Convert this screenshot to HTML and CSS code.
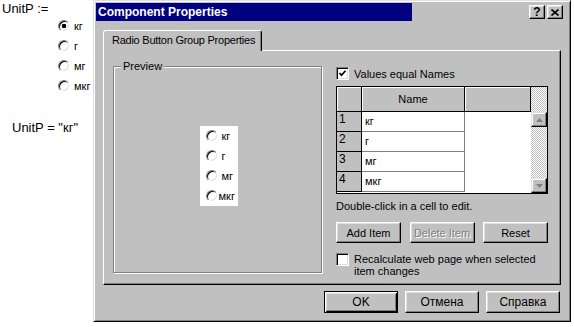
FILE: index.html
```html
<!DOCTYPE html>
<html lang="ru">
<head>
  <meta charset="UTF-8">
  <title>Component Properties</title>
  <link rel="stylesheet" href="styles.css">
</head>
<body>
  <div class="sheet">
    <div class="expr">UnitP :=</div>
    <div class="units">
      <div class="opt"><span class="radio on"></span>кг</div>
      <div class="opt"><span class="radio"></span>г</div>
      <div class="opt"><span class="radio"></span>мг</div>
      <div class="opt"><span class="radio"></span>мкг</div>
    </div>
    <div class="result">UnitP = "кг"</div>
  </div>

  <div class="dialog">
    <div class="titlebar">
      <div class="title-text">Component Properties</div>
      <div class="title-btns">
        <span class="tbtn">?</span>
        <span class="tbtn">
          <svg width="8" height="7" viewBox="0 0 8 7"><path d="M0.5 0.5 L7.5 6.5 M7.5 0.5 L0.5 6.5" stroke="#000" stroke-width="1.6"/></svg>
        </span>
      </div>
    </div>

    <div class="dlg-body">
      <div class="tabs">
        <div class="tab">Radio Button Group Properties</div>
      </div>
      <div class="panel">
        <fieldset class="group">
          <legend>Preview</legend>
          <div class="preview">
            <div class="opt"><span class="radio"></span>кг</div>
            <div class="opt"><span class="radio"></span>г</div>
            <div class="opt"><span class="radio"></span>мг</div>
            <div class="opt tight"><span class="radio"></span>мкг</div>
          </div>
        </fieldset>

        <div class="side">
          <div class="check-row">
            <span class="cbox">
              <svg width="9" height="9" viewBox="0 0 9 9"><path d="M1.5 4 L3.5 6.2 L7.5 1.8" fill="none" stroke="#000" stroke-width="1.7"/></svg>
            </span>
            Values equal Names
          </div>

          <div class="grid">
            <div class="cells">
              <div class="hd"></div>
              <div class="hd">Name</div>
              <div class="hd"></div>

              <div class="num">1</div><div class="name">кг</div><div class="blank"></div>
              <div class="num">2</div><div class="name">г</div><div class="blank"></div>
              <div class="num">3</div><div class="name">мг</div><div class="blank"></div>
              <div class="num">4</div><div class="name">мкг</div><div class="blank"></div>
            </div>
            <div class="scroll">
              <div class="track-top"></div>
              <div class="sbtn">
                <svg width="7" height="4" viewBox="0 0 7 4"><path d="M3.5 0 L7 4 L0 4 Z" fill="#808080"/></svg>
              </div>
              <div class="track"></div>
              <div class="sbtn">
                <svg width="7" height="4" viewBox="0 0 7 4"><path d="M0 0 L7 0 L3.5 4 Z" fill="#808080"/></svg>
              </div>
            </div>
          </div>

          <div class="hint">Double-click in a cell to edit.</div>

          <div class="item-btns">
            <button class="btn">Add Item</button>
            <button class="btn disabled">Delete Item</button>
            <button class="btn">Reset</button>
          </div>

          <div class="check-row wrap">
            <span class="cbox"></span>
            <span>Recalculate web page when selected<br>item changes</span>
          </div>
        </div>
      </div>

      <div class="actions">
        <button class="btn big default">OK</button>
        <button class="btn big">Отмена</button>
        <button class="btn big">Справка</button>
      </div>
    </div>
  </div>
</body>
</html>
```

FILE: styles.css
```css
body {
  margin: 0;
  width: 574px;
  height: 327px;
  position: relative;
  overflow: hidden;
  background: #fff;
  font-family: "Liberation Sans", Arial, sans-serif;
  color: #000;
}

/* worksheet on the left */

.sheet {
  padding: 1px 0 0 2px;
  font-size: 13px;
}

.expr {
  line-height: 15px;
}

.units {
  margin-left: 56px;
}

.opt {
  display: flex;
  align-items: center;
  gap: 4px;
  height: 20px;
  font-size: 11px;
}

.result {
  margin: 24px 0 0 10px;
  line-height: 16px;
}

.radio {
  width: 12px;
  height: 12px;
  flex: none;
  box-sizing: border-box;
  border-radius: 50%;
  background: #fff;
  border: 1px solid;
  border-color: #808080 #fff #fff #808080;
  box-shadow: inset 1px 1px #000, inset -1px -1px #dfdfdf;
}

.radio.on {
  background: radial-gradient(circle, #000 0 2px, #fff 2.6px);
}

/* dialog window */

.dialog {
  position: absolute;
  left: 93px;
  top: 0;
  width: 478px;
  height: 322px;
  box-sizing: border-box;
  padding: 2px;
  background: #c0c0c0;
  border: 1px solid;
  border-color: #dfdfdf #000 #000 #dfdfdf;
  box-shadow: inset 1px 1px #fff, inset -1px -1px #808080;
  font-size: 11px;
  display: flex;
  flex-direction: column;
}

.titlebar {
  display: flex;
  align-items: center;
  height: 18px;
}

.title-text {
  width: 316px;
  align-self: stretch;
  box-sizing: border-box;
  padding-left: 2px;
  background: #000080;
  color: #fff;
  font-size: 12px;
  font-weight: bold;
  line-height: 18px;
}

.title-btns {
  margin-left: auto;
  margin-right: 5px;
  display: flex;
  gap: 2px;
}

.tbtn {
  width: 16px;
  height: 14px;
  box-sizing: border-box;
  display: flex;
  align-items: center;
  justify-content: center;
  background: #c0c0c0;
  border: 1px solid;
  border-color: #fff #000 #000 #fff;
  box-shadow: inset -1px -1px #808080, inset 1px 1px #dfdfdf;
  font-weight: bold;
  font-size: 12px;
  line-height: 1;
}

.dlg-body {
  padding: 9px 7px 0 7px;
}

.tabs {
  display: flex;
}

.tab {
  position: relative;
  z-index: 1;
  width: 159px;
  height: 21px;
  box-sizing: border-box;
  margin-bottom: -1px;
  padding-left: 8px;
  line-height: 19px;
  letter-spacing: -0.25px;
  white-space: nowrap;
  background: #c0c0c0;
  border: 1px solid;
  border-bottom: none;
  border-color: #fff #000 #000 #fff;
  border-radius: 3px 3px 0 0;
  box-shadow: inset -1px 0 #808080;
}

.panel {
  height: 235px;
  box-sizing: border-box;
  padding: 9px 0 0 9px;
  border: 1px solid;
  border-color: #fff #000 #000 #fff;
  box-shadow: inset -1px -1px #808080;
  display: flex;
  gap: 14px;
}

.group {
  margin: 0;
  padding: 0;
  width: 209px;
  height: 213px;
  box-sizing: border-box;
  border: 1px solid #808080;
  box-shadow: 1px 1px #fff, inset 1px 1px #fff;
  display: flex;
  align-items: center;
  justify-content: center;
}

.group legend {
  margin-left: 7px;
  padding: 0 2px;
  line-height: 12px;
  background: #c0c0c0;
}

.preview {
  width: 38px;
  margin: 0 0 12px 2px;
  padding-left: 6px;
  box-sizing: border-box;
  background: #fff;
}

.preview .opt.tight {
  gap: 1px;
}

.side {
  width: 212px;
  padding-top: 7px;
  display: flex;
  flex-direction: column;
}

.check-row {
  display: flex;
  align-items: center;
  gap: 5px;
  height: 13px;
}

.check-row.wrap {
  align-items: flex-start;
  height: auto;
  margin-top: 10px;
  line-height: 12px;
}

.cbox {
  width: 13px;
  height: 13px;
  flex: none;
  box-sizing: border-box;
  display: flex;
  align-items: center;
  justify-content: center;
  background: #fff;
  border: 1px solid;
  border-color: #808080 #fff #fff #808080;
  box-shadow: inset 1px 1px #000, inset -1px -1px #dfdfdf;
}

/* items grid */

.grid {
  margin-top: 6px;
  height: 108px;
  box-sizing: border-box;
  border: 1px solid #000;
  display: flex;
}

.cells {
  width: 194px;
  background: #fff;
  display: grid;
  grid-template-columns: 25px 103px 66px;
  grid-template-rows: 25px repeat(4, 20px);
  align-content: start;
}

.hd {
  background: #c0c0c0;
  border-right: 1px solid #000;
  border-bottom: 1px solid #000;
  box-shadow: inset 1px 1px #fff;
  text-align: center;
  line-height: 24px;
}

.num {
  background: #c0c0c0;
  border-right: 1px solid #000;
  border-bottom: 1px solid #000;
  padding-left: 2px;
  font-size: 12px;
  line-height: 15px;
}

.name {
  border-right: 1px solid #808080;
  border-bottom: 1px solid #808080;
  padding-left: 3px;
  line-height: 19px;
}

.scroll {
  width: 16px;
  display: flex;
  flex-direction: column;
  background: repeating-conic-gradient(#fff 0 25%, #c0c0c0 0 50%) 0 0 / 2px 2px;
}

.track-top {
  height: 25px;
}

.track {
  flex: 1;
}

.sbtn {
  height: 15px;
  box-sizing: border-box;
  display: flex;
  align-items: center;
  justify-content: center;
  background: #c0c0c0;
  border: 1px solid;
  border-color: #dfdfdf #000 #000 #dfdfdf;
  box-shadow: inset -1px -1px #808080, inset 1px 1px #fff;
}

.hint {
  margin-top: 6px;
  line-height: 12px;
}

.item-btns {
  margin-top: 10px;
  display: flex;
  justify-content: space-between;
}

/* buttons */

.btn {
  width: 65px;
  height: 21px;
  padding: 0;
  box-sizing: border-box;
  background: #c0c0c0;
  border: 1px solid;
  border-color: #fff #000 #000 #fff;
  box-shadow: inset -1px -1px #808080, inset 1px 1px #dfdfdf;
  font-family: inherit;
  font-size: 11px;
  color: #000;
}

.btn.disabled {
  color: #808080;
  text-shadow: 1px 1px #fff;
}

.actions {
  margin-top: 6px;
  padding-right: 1px;
  display: flex;
  justify-content: flex-end;
  gap: 7px;
}

.btn.big {
  width: 74px;
  height: 22px;
  font-size: 12px;
}

.btn.default {
  border-color: #000;
  box-shadow: inset 1px 1px #fff, inset -1px -1px #000, inset 2px 2px #dfdfdf, inset -2px -2px #808080;
}
```
